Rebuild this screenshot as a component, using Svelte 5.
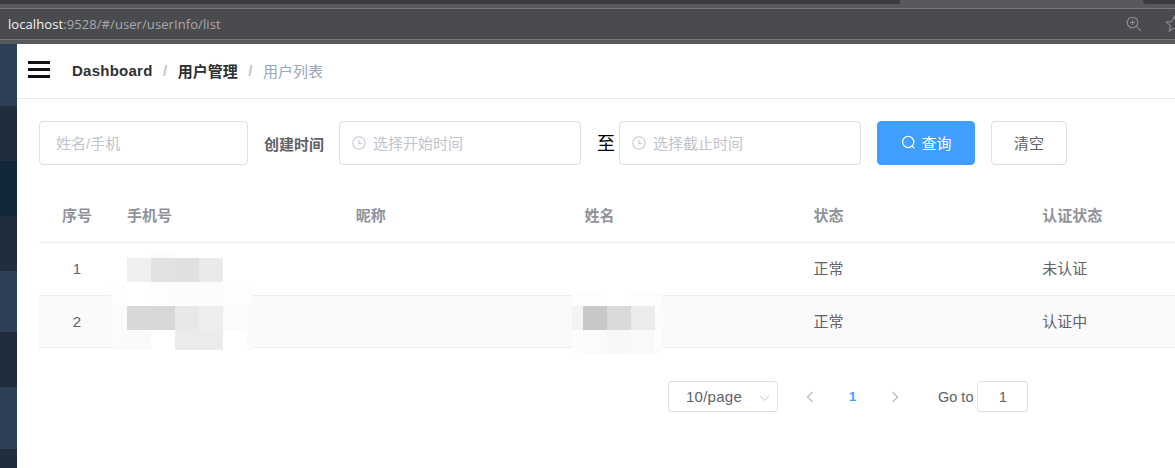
<script lang="ts">
  const stripes = [
    { h: 62, c: "#2e4058" },
    { h: 55, c: "#1f2d3d" },
    { h: 55, c: "#12263a" },
    { h: 55, c: "#1f2d3d" },
    { h: 61, c: "#2e4058" },
    { h: 55, c: "#1f2d3d" },
    { h: 62, c: "#2e4058" },
    { h: 19, c: "#1f2d3d" },
  ];

  const columns = ["序号", "手机号", "昵称", "姓名", "状态", "认证状态"];
  const rows = [
    { no: 1, status: "正常", auth: "未认证" },
    { no: 2, status: "正常", auth: "认证中" },
  ];

  // pixelated blocks over the private columns
  const phoneBlur = {
    cols: "16px 24px 24px 24px 24px 24px 5px",
    rows: "6px 24px 24px 24px 20px",
    cells: [
      "transparent", "transparent", "#fbfbfb", "transparent", "transparent", "transparent", "transparent",
      "transparent", "#efefef", "#e2e2e2", "#e0e0e0", "#e9eaec", "transparent", "transparent",
      "#fdfdfd", "#ffffff", "#fdfdfd", "#fcfcfc", "#fcfcfc", "#fdfdfd", "#fdfdfd",
      "#fbfbfb", "#d8d8d8", "#d6d8d8", "#e8e8e8", "#eeeeee", "#fbfbfb", "#fbfbfb",
      "#fbfbfb", "#fafafa", "#fefffe", "#ebebeb", "#ebebeb", "#fefffe", "#fbfbfb",
    ],
  };
  const nameBlur = {
    cols: "11px 24px 24px 24px 7px",
    rows: "13px 24px 24px",
    cells: [
      "#fdfdfd", "#fdfdfd", "#ffffff", "#fdfdfd", "#fdfdfd",
      "#f3f3f1", "#c8c8ca", "#d9dbdb", "#e9ebed", "#fcfcfc",
      "#fdfdfd", "#fbfbfb", "#f8f8f8", "#f9f9f9", "#fdfdfd",
    ],
  };
</script>

<div class="page">
  <div class="chrome">
    <div class="tabs"><div class="tabstrip"></div><div class="tabstrip-right"></div></div>
    <div class="address">
      <span class="url"><span class="host">localhost</span>:9528/#/user/userInfo/list</span>
      <div class="chrome-icons">
        <svg width="16" height="16" viewBox="0 0 16 16" fill="none" stroke="#8c8d90" stroke-width="1.1">
          <circle cx="6.5" cy="6.5" r="5.3" />
          <path d="M10.4 10.4 L14.8 14.8 M4 6.5 H9 M6.5 4 V9" />
        </svg>
        <svg class="star" width="18" height="18" viewBox="0 0 18 18" fill="none" stroke="#8c8d90" stroke-width="1.1">
          <path d="M9 1.5 L11.2 6.6 L16.7 7.1 L12.5 10.7 L13.8 16.1 L9 13.3 L4.2 16.1 L5.5 10.7 L1.3 7.1 L6.8 6.6 Z" />
        </svg>
      </div>
    </div>
    <div class="chrome-bottom"></div>
  </div>

  <div class="body">
    <aside class="sidebar">
      {#each stripes as s}
        <div style="height:{s.h}px;background:{s.c}"></div>
      {/each}
    </aside>

    <main class="main">
      <nav class="navbar">
        <div class="hamburger"><span></span><span></span><span></span></div>
        <div class="crumbs">
          <b class="latin">Dashboard</b>
          <i>/</i>
          <b>用户管理</b>
          <i>/</i>
          <span>用户列表</span>
        </div>
      </nav>

      <div class="content">
        <form class="filters">
          <div class="input name">姓名/手机</div>
          <label for="start">创建时间</label>
          <div class="input date" id="start">
            <svg class="clock" width="14" height="14" viewBox="0 0 14 14" fill="none" stroke="#c6cad3" stroke-width="1.1">
              <circle cx="7" cy="7" r="6.2" />
              <path d="M7 3.4 V7.4 H9.8" />
            </svg>
            选择开始时间
          </div>
          <span class="to">至</span>
          <div class="input date">
            <svg class="clock" width="14" height="14" viewBox="0 0 14 14" fill="none" stroke="#c6cad3" stroke-width="1.1">
              <circle cx="7" cy="7" r="6.2" />
              <path d="M7 3.4 V7.4 H9.8" />
            </svg>
            选择截止时间
          </div>
          <button type="button" class="btn primary">
            <svg width="15" height="15" viewBox="0 0 15 15" fill="none" stroke="#fff" stroke-width="1.2">
              <circle cx="7.2" cy="7" r="5.6" />
              <path d="M11.2 11 L13.4 13.4" />
            </svg>
            查询
          </button>
          <button type="button" class="btn">清空</button>
        </form>

        <div class="table">
          <div class="row head">
            {#each columns as c, i}
              <div class="cell" class:center={i === 0}>{c}</div>
            {/each}
          </div>
          {#each rows as r, i}
            <div class="row" class:striped={i === 1}>
              <div class="cell number">{r.no}</div>
              <div class="cell"></div>
              <div class="cell"></div>
              <div class="cell"></div>
              <div class="cell">{r.status}</div>
              <div class="cell">{r.auth}</div>
            </div>
          {/each}

          <div class="blur phone" style="grid-template-columns:{phoneBlur.cols};grid-template-rows:{phoneBlur.rows}">
            {#each phoneBlur.cells as c}<div style="background:{c}"></div>{/each}
          </div>
          <div class="blur realname" style="grid-template-columns:{nameBlur.cols};grid-template-rows:{nameBlur.rows}">
            {#each nameBlur.cells as c}<div style="background:{c}"></div>{/each}
          </div>
        </div>

        <div class="pager">
          <div class="size">
            <span>10/page</span>
            <svg width="11" height="7" viewBox="0 0 11 7" fill="none" stroke="#c0c4cc" stroke-width="1">
              <path d="M1 1 L5.5 5.5 L10 1" />
            </svg>
          </div>
          <svg class="arrow" width="8" height="12" viewBox="0 0 8 12" fill="none" stroke="#c0c4cc" stroke-width="1.6">
            <path d="M6.5 1 L1.5 6 L6.5 11" />
          </svg>
          <span class="current">1</span>
          <svg class="arrow next" width="8" height="12" viewBox="0 0 8 12" fill="none" stroke="#c0c4cc" stroke-width="1.6">
            <path d="M1.5 1 L6.5 6 L1.5 11" />
          </svg>
          <span class="goto">Go to</span>
          <div class="jump">1</div>
        </div>
      </div>
    </main>
  </div>
</div>

<style>
  :global(body) {
    margin: 0;
    background: #fff;
    overflow: hidden;
  }

  .page {
    width: 1175px;
    height: 468px;
    overflow: hidden;
    font-family: "Liberation Sans", "Noto Sans CJK SC", sans-serif;
    font-size: 15px;
    display: flex;
    flex-direction: column;
  }

  .chrome {
    height: 44px;
    flex-shrink: 0;
    background: #4a4b4f;
    display: flex;
    flex-direction: column;
  }

  .tabs {
    height: 8px;
    background: #58595d;
    border-bottom: 1px solid #78797c;
    position: relative;
  }
  .tabstrip {
    height: 4px;
    width: 900px;
    background: #3b3c40;
  }
  .tabstrip-right {
    position: absolute;
    top: 0;
    right: 0;
    width: 32px;
    height: 4px;
    background: #3b3c40;
    border-bottom-left-radius: 5px;
  }

  .address {
    height: 30px;
    display: flex;
    align-items: center;
    justify-content: space-between;
    padding-left: 8px;
  }
  .url {
    font-family: "Open Sans", "Liberation Sans", sans-serif;
    font-size: 13px;
    letter-spacing: 0.08px;
    color: #a9aaad;
  }
  .host {
    color: #f4f4f4;
  }
  .chrome-icons {
    display: flex;
    align-items: center;
    gap: 23px;
    margin-right: -8px;
  }

  .chrome-bottom {
    height: 4px;
    border-top: 1px solid #78797c;
    background: #58595d;
  }

  .body {
    flex: 1;
    display: flex;
    min-height: 0;
  }

  .sidebar {
    width: 17px;
    flex-shrink: 0;
  }

  .main {
    flex: 1;
    min-width: 0;
    overflow: hidden;
  }

  .navbar {
    height: 54px;
    border-bottom: 1px solid #e6e6e6;
    display: flex;
    align-items: center;
    padding-left: 11px;
    gap: 22px;
  }

  .hamburger {
    width: 22px;
    height: 17px;
    display: flex;
    flex-direction: column;
    justify-content: space-between;
    margin-top: -4px;
  }
  .hamburger span {
    height: 3px;
    background: #111;
  }

  .crumbs {
    display: flex;
    align-items: center;
    margin-top: -2px;
    color: #97a8be;
  }
  .crumbs b {
    color: #303133;
    font-weight: 700;
  }
  .crumbs i {
    font-style: normal;
    color: #c0c4cc;
    font-weight: 700;
    margin: 0 10.5px;
  }
  .crumbs .latin {
    letter-spacing: 0.25px;
  }

  .content {
    padding: 22px 0 0 22px;
  }

  .filters {
    display: flex;
    align-items: center;
    height: 44px;
  }

  .input {
    height: 44px;
    box-sizing: border-box;
    border: 1px solid #dcdfe6;
    border-radius: 4px;
    display: flex;
    align-items: center;
    padding-bottom: 2px;
    color: #c0c4cc;
  }
  .input.name {
    width: 209px;
    padding-left: 16px;
  }
  .input.date {
    width: 242px;
    padding-left: 12px;
    gap: 7px;
  }
  .clock {
    flex-shrink: 0;
    margin-top: 2px;
  }

  label {
    font-weight: 700;
    color: #606266;
    margin: 0 15px 0 16px;
  }

  .to {
    font-size: 18px;
    color: #000;
    margin: -3px 4px 0 16px;
  }

  .btn {
    height: 44px;
    box-sizing: border-box;
    width: 76px;
    margin-left: 16px;
    border: 1px solid #dcdfe6;
    border-radius: 4px;
    background: #fff;
    color: #606266;
    font-family: inherit;
    font-size: 15px;
    padding: 0 0 2px;
    display: flex;
    align-items: center;
    justify-content: center;
    gap: 6px;
  }
  .btn svg {
    margin-top: 1px;
  }
  .btn.primary {
    width: 98px;
    background: #409eff;
    border-color: #409eff;
    color: #fff;
  }

  .table {
    position: relative;
    margin-top: 25px;
    width: 1140px;
    color: #606266;
  }

  .row {
    display: grid;
    grid-template-columns: 76px repeat(5, 228.8px);
    height: 52px;
    border-bottom: 1px solid #ebeef5;
    align-items: center;
  }
  .row.head {
    color: #909399;
    font-weight: 700;
  }
  .row.striped {
    background: #fafafa;
    height: 51px;
  }

  .cell {
    padding-left: 12px;
    margin-top: -3px;
  }
  .cell.center {
    padding-left: 0;
    text-align: center;
  }
  .cell.number {
    padding-left: 0;
    margin-top: -1px;
    text-align: center;
  }

  .blur {
    position: absolute;
    display: grid;
  }
  .blur.phone {
    left: 72px;
    top: 62px;
  }
  .blur.realname {
    left: 533px;
    top: 103px;
  }

  .pager {
    display: flex;
    align-items: center;
    height: 31px;
    margin-top: 33px;
    padding-left: 629px;
    color: #606266;
  }

  .size {
    width: 110px;
    height: 31px;
    box-sizing: border-box;
    border: 1px solid #dcdfe6;
    border-radius: 3px;
    display: flex;
    align-items: center;
    justify-content: space-between;
    padding: 0 7px 0 17px;
  }
  .size span {
    letter-spacing: 0.25px;
  }
  .size svg {
    margin-top: 4px;
  }

  .arrow {
    margin-left: 28px;
  }
  .arrow.next {
    margin-left: 0;
  }

  .current {
    width: 77px;
    text-align: center;
    font-size: 13px;
    font-weight: 700;
    color: #409eff;
  }

  .goto {
    margin-left: 39px;
    font-size: 14.5px;
  }

  .jump {
    width: 51px;
    height: 31px;
    box-sizing: border-box;
    margin-left: 4px;
    border: 1px solid #dcdfe6;
    border-radius: 3px;
    display: flex;
    align-items: center;
    justify-content: center;
  }
</style>
